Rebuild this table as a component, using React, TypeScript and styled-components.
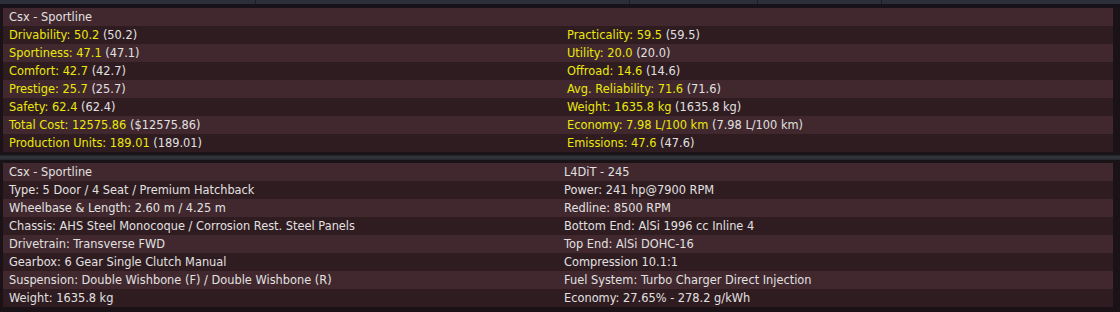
import styled, { createGlobalStyle } from 'styled-components';

const GlobalStyle = createGlobalStyle`
  html, body {
    margin: 0;
    padding: 0;
    background: #15101a;
  }
  body {
    width: 1120px;
    height: 312px;
    overflow: hidden;
    font-family: 'DejaVu Sans', 'Liberation Sans', sans-serif;
  }
`;

interface Stat {
  label: string;
  value: string;
  base: string;
}

const leftStats: Stat[] = [
  { label: 'Drivability', value: '50.2', base: '(50.2)' },
  { label: 'Sportiness', value: '47.1', base: '(47.1)' },
  { label: 'Comfort', value: '42.7', base: '(42.7)' },
  { label: 'Prestige', value: '25.7', base: '(25.7)' },
  { label: 'Safety', value: '62.4', base: '(62.4)' },
  { label: 'Total Cost', value: '12575.86', base: '($12575.86)' },
  { label: 'Production Units', value: '189.01', base: '(189.01)' },
];

const rightStats: Stat[] = [
  { label: 'Practicality', value: '59.5', base: '(59.5)' },
  { label: 'Utility', value: '20.0', base: '(20.0)' },
  { label: 'Offroad', value: '14.6', base: '(14.6)' },
  { label: 'Avg. Reliability', value: '71.6', base: '(71.6)' },
  { label: 'Weight', value: '1635.8 kg', base: '(1635.8 kg)' },
  { label: 'Economy', value: '7.98 L/100 km', base: '(7.98 L/100 km)' },
  { label: 'Emissions', value: '47.6', base: '(47.6)' },
];

const carSpecs = [
  'Csx - Sportline',
  'Type: 5 Door / 4 Seat / Premium Hatchback',
  'Wheelbase & Length: 2.60 m / 4.25 m',
  'Chassis: AHS Steel Monocoque / Corrosion Rest. Steel Panels',
  'Drivetrain: Transverse FWD',
  'Gearbox: 6 Gear Single Clutch Manual',
  'Suspension: Double Wishbone (F) / Double Wishbone (R)',
  'Weight: 1635.8 kg',
];

const engineSpecs = [
  'L4DiT - 245',
  'Power: 241 hp@7900 RPM',
  'Redline: 8500 RPM',
  'Bottom End: AlSi 1996 cc Inline 4',
  'Top End: AlSi DOHC-16',
  'Compression 10.1:1',
  'Fuel System: Turbo Charger Direct Injection',
  'Economy: 27.65% - 278.2 g/kWh',
];

const Screen = styled.div`
  width: 1120px;
  height: 312px;
  display: flex;
  flex-direction: column;
  background: #1a1216;
`;

const TabStrip = styled.div`
  height: 4px;
  display: flex;
  background: #2c2f3a;
  border-bottom: 4px solid #17121a;
`;

const TabSlot = styled.div<{ $width: number }>`
  width: ${(p) => p.$width}px;
  border-right: 1px solid #1c1d25;
  flex-shrink: 0;
`;

const Divider = styled.div`
  height: 11px;
  display: flex;
  flex-direction: column;
  justify-content: center;
  background: #191216;

  &::after {
    content: '';
    height: 5px;
    background: linear-gradient(#23252c, #34363e 50%, #24262d);
  }
`;

const Panel = styled.div`
  margin: 0 7px 0 3px;
  display: flex;
  flex-direction: column;
  box-shadow: inset -18px 0 16px -10px rgba(0, 0, 0, 0.45);
`;

const Row = styled.div<{ $split: number; $odd: boolean }>`
  height: 18px;
  display: grid;
  grid-template-columns: ${(p) => p.$split}px 1fr;
  align-items: center;
  padding-left: 6px;
  background: ${(p) => (p.$odd ? '#2f1c21' : '#40282e')};
  font-size: 11.4px;
  color: #e2e0e0;
  white-space: nowrap;
`;

const Label = styled.span`
  color: #ebe80c;
`;

const StatCell = ({ stat }: { stat?: Stat }) =>
  stat ? (
    <span>
      <Label>
        {stat.label}: {stat.value}
      </Label>{' '}
      {stat.base}
    </span>
  ) : (
    <span />
  );

export default function App() {
  return (
    <Screen>
      <GlobalStyle />
      <TabStrip>
        <TabSlot $width={255} />
        <TabSlot $width={373} />
        <TabSlot $width={127} />
        <TabSlot $width={123} />
      </TabStrip>
      <Panel>
        <Row $split={558} $odd={false}>
          <span>Csx - Sportline</span>
          <span />
        </Row>
        {leftStats.map((s, i) => (
          <Row key={s.label} $split={558} $odd={i % 2 === 0}>
            <StatCell stat={s} />
            <StatCell stat={rightStats[i]} />
          </Row>
        ))}
      </Panel>
      <Divider />
      <Panel>
        {carSpecs.map((c, i) => (
          <Row key={c} $split={555} $odd={i % 2 === 1}>
            <span>{c}</span>
            <span>{engineSpecs[i]}</span>
          </Row>
        ))}
      </Panel>
    </Screen>
  );
}
